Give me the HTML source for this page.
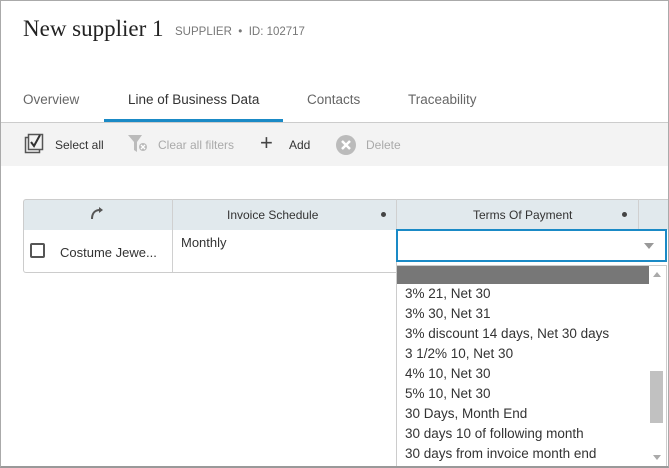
<!DOCTYPE html>
<html><head><style>
*{margin:0;padding:0;box-sizing:border-box}
body{width:669px;height:468px;overflow:hidden;background:#fff;font-family:"Liberation Sans",sans-serif;position:relative}
.frame{position:absolute;left:0;top:0;width:669px;height:468px;border:1px solid #aaa;border-bottom:2px solid #999}
.abs{position:absolute;white-space:nowrap}
.title{left:23px;top:16px;font-family:"Liberation Serif",serif;font-size:23px;color:#222}
.sub{left:175px;top:26px;font-size:11.5px;color:#777}
.tab{top:92px;font-size:13.5px;color:#666}
.tb{left:1px;top:122px;width:667px;height:44px;background:#f3f3f3;border-top:1px solid #ccc}
.tbt{top:138px;font-size:12px;color:#333}
.dis{color:#aaa}
.hdr{left:23px;top:199px;width:645px;height:31px;background:#e1e9ed;border:1px solid #ccc;border-right:none;border-bottom:none;border-radius:3px 0 0 0}
.hc{top:208px;font-size:12px;color:#333}
.dot{width:5px;height:5px;border-radius:50%;background:#444;top:212px}
.vl{width:1px;background:#d0d0d0}
.row{left:23px;top:230px;width:374px;height:43px;border:1px solid #ccc;border-top:none;border-radius:0 0 0 3px}
.item{left:405px;font-size:13.5px;color:#333}
</style></head><body>
<div class="frame"></div>
<div class="abs title">New supplier 1</div>
<div class="abs sub">SUPPLIER &nbsp;•&nbsp; ID: 102717</div>
<div class="abs tab" style="left:23px">Overview</div>
<div class="abs tab" style="left:128px;color:#333">Line of Business Data</div>
<div class="abs tab" style="left:307px">Contacts</div>
<div class="abs tab" style="left:408px">Traceability</div>
<div class="abs" style="left:104px;top:119px;width:179px;height:3px;background:#1a8ac6;z-index:2"></div>
<div class="abs tb"></div>
<svg class="abs" style="left:24px;top:133px" width="22" height="22" viewBox="0 0 22 22"><rect x="1.5" y="4.5" width="14" height="15" fill="none" stroke="#555" stroke-width="1.5"/><rect x="4.5" y="1.5" width="14" height="15" fill="#f3f3f3" stroke="#555" stroke-width="1.5"/><path d="M7 9l3 4 6-11" fill="none" stroke="#333" stroke-width="2"/></svg>
<div class="abs tbt" style="left:55px">Select all</div>
<svg class="abs" style="left:127px;top:134px" width="22" height="20" viewBox="0 0 22 20"><path d="M1 1h14l-5 7v10l-3-2v-8z" fill="#bbb"/><circle cx="16" cy="13" r="4" fill="#bbb"/><path d="M14 11l4 4M18 11l-4 4" stroke="#fff" stroke-width="1.3"/></svg>
<div class="abs tbt dis" style="left:158px">Clear all filters</div>
<div class="abs" style="left:260px;top:131px;font-size:22px;color:#444;line-height:24px">+</div>
<div class="abs tbt" style="left:289px">Add</div>
<svg class="abs" style="left:336px;top:135px" width="20" height="20" viewBox="0 0 20 20"><circle cx="10" cy="10" r="10" fill="#bbb"/><path d="M6 6l8 8M14 6l-8 8" stroke="#fff" stroke-width="2.5"/></svg>
<div class="abs tbt dis" style="left:366px">Delete</div>

<div class="abs hdr"></div>
<div class="abs vl" style="left:172px;top:199px;height:74px"></div>
<div class="abs vl" style="left:396px;top:199px;height:31px"></div>
<div class="abs vl" style="left:638px;top:199px;height:31px"></div>
<svg class="abs" style="left:89px;top:206px" width="16" height="14" viewBox="0 0 16 14"><path d="M3 13C3 7 6 4 11 4" fill="none" stroke="#555" stroke-width="2"/><path d="M10 1l4 3-4 3z" fill="#555"/></svg>
<div class="abs hc" style="left:227px">Invoice Schedule</div>
<div class="abs dot" style="left:381px"></div>
<div class="abs hc" style="left:473px">Terms Of Payment</div>
<div class="abs dot" style="left:622px"></div>
<div class="abs row"></div>
<div class="abs" style="left:30px;top:243px;width:15px;height:15px;border:2px solid #555;border-radius:2px"></div>
<div class="abs" style="left:60px;top:245px;font-size:13px;color:#333">Costume Jewe...</div>
<div class="abs" style="left:181px;top:235px;font-size:13px;color:#333">Monthly</div>
<div class="abs" style="left:396px;top:229px;width:271px;height:33px;border:2px solid #1a8ac6;background:#fff"></div>
<svg class="abs" style="left:644px;top:243px" width="10" height="6"><path d="M0 0h10L5 6z" fill="#999"/></svg>
<div class="abs" style="left:396px;top:265px;width:271px;height:201px;background:#fff;border:1px solid #ccc;border-bottom:none"></div>
<div class="abs" style="left:397px;top:266px;width:252px;height:18px;background:#777"></div>
<svg class="abs" style="left:653px;top:272px" width="8" height="5"><path d="M0 5h8L4 0z" fill="#aaa"/></svg>
<svg class="abs" style="left:653px;top:455px" width="8" height="5"><path d="M0 0h8L4 5z" fill="#aaa"/></svg>
<div class="abs" style="left:650px;top:371px;width:13px;height:52px;background:#c1c1c1"></div>
<div class="abs item" style="top:286px">3% 21, Net 30</div>
<div class="abs item" style="top:306px">3% 30, Net 31</div>
<div class="abs item" style="top:326px">3% discount 14 days, Net 30 days</div>
<div class="abs item" style="top:346px">3 1/2% 10, Net 30</div>
<div class="abs item" style="top:366px">4% 10, Net 30</div>
<div class="abs item" style="top:386px">5% 10, Net 30</div>
<div class="abs item" style="top:406px">30 Days, Month End</div>
<div class="abs item" style="top:426px">30 days 10 of following month</div>
<div class="abs item" style="top:446px">30 days from invoice month end</div>
</body></html>
